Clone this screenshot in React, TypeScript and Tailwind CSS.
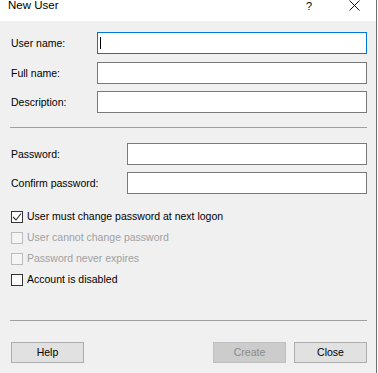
import React from "react";

const font = { fontFamily: '"Liberation Sans", Arial, sans-serif' };

function Field({ label, labelW, focused }: { label: string; labelW: string; focused?: boolean }) {
  return (
    <div className="flex items-center h-[22px]">
      <div className={`${labelW} pl-[1px] text-[10.5px] text-black leading-none`}>{label}</div>
      <div
        className={`relative flex-1 h-[22px] bg-white border ${
          focused ? "border-[#0078d7]" : "border-[#7a7a7a]"
        }`}
      >
        {focused && <div className="absolute left-[2px] top-[4px] w-px h-[12px] bg-black" />}
      </div>
    </div>
  );
}

function Check({ label, checked, disabled }: { label: string; checked?: boolean; disabled?: boolean }) {
  return (
    <div className="flex items-center h-[21px]">
      <div
        className={`ml-[1px] w-[12px] h-[12px] border flex items-center justify-center ${
          disabled ? "border-[#bcbcbc] bg-[#f4f4f4]" : "border-[#333333] bg-white"
        }`}
      >
        {checked && (
          <svg width="10" height="10" viewBox="0 0 10 10">
            <path d="M1 5 L4 8 L9 1.5" fill="none" stroke="#333" strokeWidth="1.1" />
          </svg>
        )}
      </div>
      <span className={`ml-[4px] text-[10.5px] leading-none ${disabled ? "text-[#a0a0a0]" : "text-black"}`}>
        {label}
      </span>
    </div>
  );
}

function Btn({ label, disabled }: { label: string; disabled?: boolean }) {
  return (
    <div
      className={`w-[73px] h-[21px] border flex items-center justify-center text-[10.5px] ${
        disabled ? "bg-[#cccccc] border-[#bfbfbf] text-[#8a8a8a]" : "bg-[#e1e1e1] border-[#adadad] text-black"
      }`}
    >
      {label}
    </div>
  );
}

export default function App() {
  return (
    <div className="w-[378px] h-[373px] bg-white flex" style={font}>
      <div className="w-[377px] h-full border-r border-[#6f6f6f] bg-[#f0f0f0] flex flex-col">
        <div className="h-[21px] bg-white flex items-start relative">
          <span className="ml-[8px] mt-[-1px] text-[11.5px] leading-[13px] text-black">New User</span>
          <span className="absolute left-[306px] top-0 text-[11px] leading-[13px] text-black">?</span>
          <svg className="absolute left-[349px] top-[0px]" width="11" height="11" viewBox="0 0 11 11">
            <path d="M0.5 0.5 L10.5 10.5 M10.5 0.5 L0.5 10.5" stroke="#111" strokeWidth="1" />
          </svg>
        </div>
        <div className="flex flex-col pl-[10px] pr-[9px]">
          <div className="mt-[11px]">
            <Field label="User name:" labelW="w-[87px]" focused />
          </div>
          <div className="mt-[8px]">
            <Field label="Full name:" labelW="w-[87px]" />
          </div>
          <div className="mt-[7px]">
            <Field label="Description:" labelW="w-[87px]" />
          </div>
          <div className="mt-[14px] h-px bg-[#a0a0a0]" />
          <div className="mt-[15px]">
            <Field label="Password:" labelW="w-[117px]" />
          </div>
          <div className="mt-[7px]">
            <Field label="Confirm password:" labelW="w-[117px]" />
          </div>
          <div className="mt-[12px] flex flex-col">
            <Check label="User must change password at next logon" checked />
            <Check label="User cannot change password" disabled />
            <Check label="Password never expires" disabled />
            <Check label="Account is disabled" />
          </div>
          <div className="mt-[30px] h-px bg-[#a0a0a0]" />
          <div className="mt-[21px] flex items-center">
            <div className="ml-[1px]">
              <Btn label="Help" />
            </div>
            <div className="ml-auto flex gap-[8px]">
              <Btn label="Create" disabled />
              <Btn label="Close" />
            </div>
          </div>
        </div>
      </div>
    </div>
  );
}
